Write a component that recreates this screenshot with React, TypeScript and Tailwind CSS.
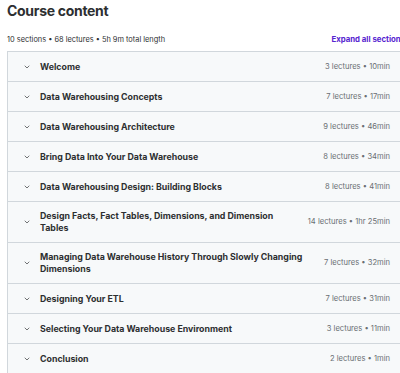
import { ChevronDown } from "lucide-react";

const sections = [
  { title: "Welcome", meta: "3 lectures • 10min" },
  { title: "Data Warehousing Concepts", meta: "7 lectures • 17min" },
  { title: "Data Warehousing Architecture", meta: "9 lectures • 46min" },
  { title: "Bring Data Into Your Data Warehouse", meta: "8 lectures • 34min" },
  { title: "Data Warehousing Design: Building Blocks", meta: "8 lectures • 41min" },
  { title: "Design Facts, Fact Tables, Dimensions, and Dimension Tables", meta: "14 lectures • 1hr 25min", tall: true },
  { title: "Managing Data Warehouse History Through Slowly Changing Dimensions", meta: "7 lectures • 32min", tall: true },
  { title: "Designing Your ETL", meta: "7 lectures • 31min" },
  { title: "Selecting Your Data Warehouse Environment", meta: "3 lectures • 11min" },
  { title: "Conclusion", meta: "2 lectures • 1min" },
];

export default function App() {
  return (
    <div className="w-[400px] h-[373px] overflow-hidden bg-white font-['Inter',sans-serif] text-[#2d2f31]">
      <div className="pl-[7px]">
        <h2 className="text-[14px] font-bold leading-[18px] pt-[2px] tracking-[-0.3px]">Course content</h2>
        <div className="flex items-center justify-between mt-[13px] h-[13px] w-[420px]">
          <span className="text-[7.4px] text-[#2d2f31]">10 sections • 68 lectures • 5h 9m total length</span>
          <span className="text-[7.8px] font-bold text-[#5624d0] pr-[22px]">Expand all sections</span>
        </div>
        <div className="mt-[5px] w-[400px] border-l border-t border-[#d1d7dc]">
          {sections.map((s) => (
            <div
              key={s.title}
              className={`flex items-center gap-[10px] bg-[#f7f9fa] border-b border-[#d1d7dc] pl-[15px] pr-[17px] ${s.tall ? "py-[8px]" : "py-[8.5px]"}`}
            >
              <ChevronDown className="w-[8px] h-[8px] shrink-0 text-[#2d2f31] mr-[-2px]" strokeWidth={2} />
              <div className="flex-1 text-[8.8px] font-bold leading-[12px] pl-[1px]">{s.title}</div>
              <div className="shrink-0 text-[7.6px] text-[#6a6f73] leading-[12px]">{s.meta}</div>
            </div>
          ))}
        </div>
      </div>
    </div>
  );
}
